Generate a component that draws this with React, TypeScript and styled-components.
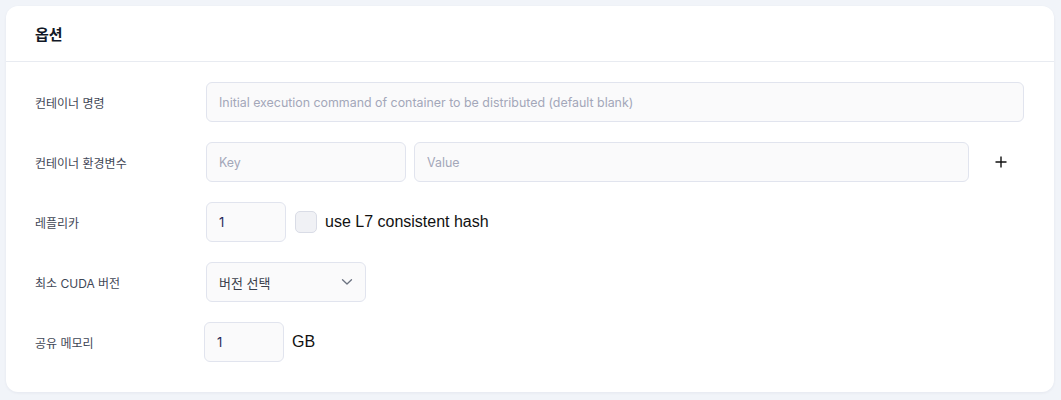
import React from 'react'
import styled, {createGlobalStyle} from 'styled-components'

const GlobalStyle = createGlobalStyle`
  html, body {
    margin: 0;
    background: #f1f4f9;
  }
  body {
    font-family: Inter, "Noto Sans CJK KR", "Noto Sans", sans-serif;
    color: #111827;
  }
`

const Page = styled.div`
  padding: 6px 7px 8px 6px;
`

const Card = styled.section`
  background: #ffffff;
  border-radius: 12px;
  box-shadow: 0 1px 3px rgba(30, 40, 80, 0.06);
`

const CardHeader = styled.header`
  height: 55px;
  display: flex;
  align-items: center;
  padding: 0 29px;
  border-bottom: 1px solid #e8ebf1;
`

const Title = styled.h2`
  margin: 0;
  font-size: 15px;
  font-weight: 700;
  color: #111827;
`

const CardBody = styled.div`
  display: flex;
  flex-direction: column;
  gap: 20px;
  padding: 20px 30px 30px 29px;
`

const Row = styled.div`
  display: grid;
  grid-template-columns: 171px 1fr;
  align-items: center;
  height: 40px;
`

const Label = styled.label`
  font-size: 12px;
  color: #3f4756;
  font-weight: 400;
`

const Controls = styled.div<{$shift?: number}>`
  display: flex;
  align-items: center;
  gap: 8px;
  margin-left: ${(p) => p.$shift ?? 0}px;
`

const Input = styled.input<{$width?: number}>`
  box-sizing: border-box;
  height: 40px;
  ${(p) => (p.$width ? `width: ${p.$width}px; flex: none;` : 'flex: 1; min-width: 0;')}
  padding: 0 12px;
  border: 1px solid #e1e4ee;
  border-radius: 6px;
  background: #fafafb;
  font-family: inherit;
  font-size: 13px;
  color: #1f2a5a;
  outline: none;

  &::placeholder {
    font-size: 12.4px;
    color: #a3a7b9;
  }
`

const PlusButton = styled.button`
  flex: none;
  width: 47px;
  height: 40px;
  display: flex;
  align-items: center;
  justify-content: center;
  border: 0;
  background: transparent;
  padding: 0;
  cursor: pointer;
`

const CheckRow = styled.label`
  display: flex;
  align-items: center;
  gap: 8px;
  margin-left: 1px;
  font-size: 16px;
  color: #111111;
  font-family: "Liberation Sans", Arial, sans-serif;
`

const CheckBox = styled.span`
  width: 22px;
  height: 22px;
  box-sizing: border-box;
  border: 1px solid #d9dce6;
  border-radius: 5px;
  background: #f0f1f5;
`

const Select = styled.div`
  box-sizing: border-box;
  width: 160px;
  height: 40px;
  display: flex;
  align-items: center;
  justify-content: space-between;
  padding: 0 12px;
  border: 1px solid #e1e4ee;
  border-radius: 6px;
  background: #fafafb;
  font-size: 13px;
  color: #3a3f4b;
`

const Unit = styled.span`
  font-size: 16px;
  color: #111111;
  font-family: "Liberation Sans", Arial, sans-serif;
`

const Plus = () => (
  <svg width="12" height="12" viewBox="0 0 12 12" fill="none">
    <path d="M6 0.5v11M0.5 6h11" stroke="#111" strokeWidth="1.4" />
  </svg>
)

const Chevron = () => (
  <svg width="12" height="8" viewBox="0 0 12 8" fill="none">
    <path d="M1.5 1.8L6 6l4.5-4.2" stroke="#6b7280" strokeWidth="1.3" strokeLinecap="round" strokeLinejoin="round" />
  </svg>
)

export default function App() {
  return (
    <Page>
      <GlobalStyle />
      <Card>
        <CardHeader>
          <Title>옵션</Title>
        </CardHeader>
        <CardBody>
          <Row>
            <Label>컨테이너 명령</Label>
            <Controls>
              <Input placeholder="Initial execution command of container to be distributed (default blank)" />
            </Controls>
          </Row>
          <Row>
            <Label>컨테이너 환경변수</Label>
            <Controls>
              <Input $width={200} placeholder="Key" />
              <Input placeholder="Value" />
              <PlusButton aria-label="add">
                <Plus />
              </PlusButton>
            </Controls>
          </Row>
          <Row>
            <Label>레플리카</Label>
            <Controls>
              <Input $width={80} defaultValue="1" />
              <CheckRow>
                <CheckBox />
                use L7 consistent hash
              </CheckRow>
            </Controls>
          </Row>
          <Row>
            <Label>최소 CUDA 버전</Label>
            <Controls>
              <Select>
                버전 선택
                <Chevron />
              </Select>
            </Controls>
          </Row>
          <Row>
            <Label>공유 메모리</Label>
            <Controls $shift={-2}>
              <Input $width={80} defaultValue="1" />
              <Unit>GB</Unit>
            </Controls>
          </Row>
        </CardBody>
      </Card>
    </Page>
  )
}
